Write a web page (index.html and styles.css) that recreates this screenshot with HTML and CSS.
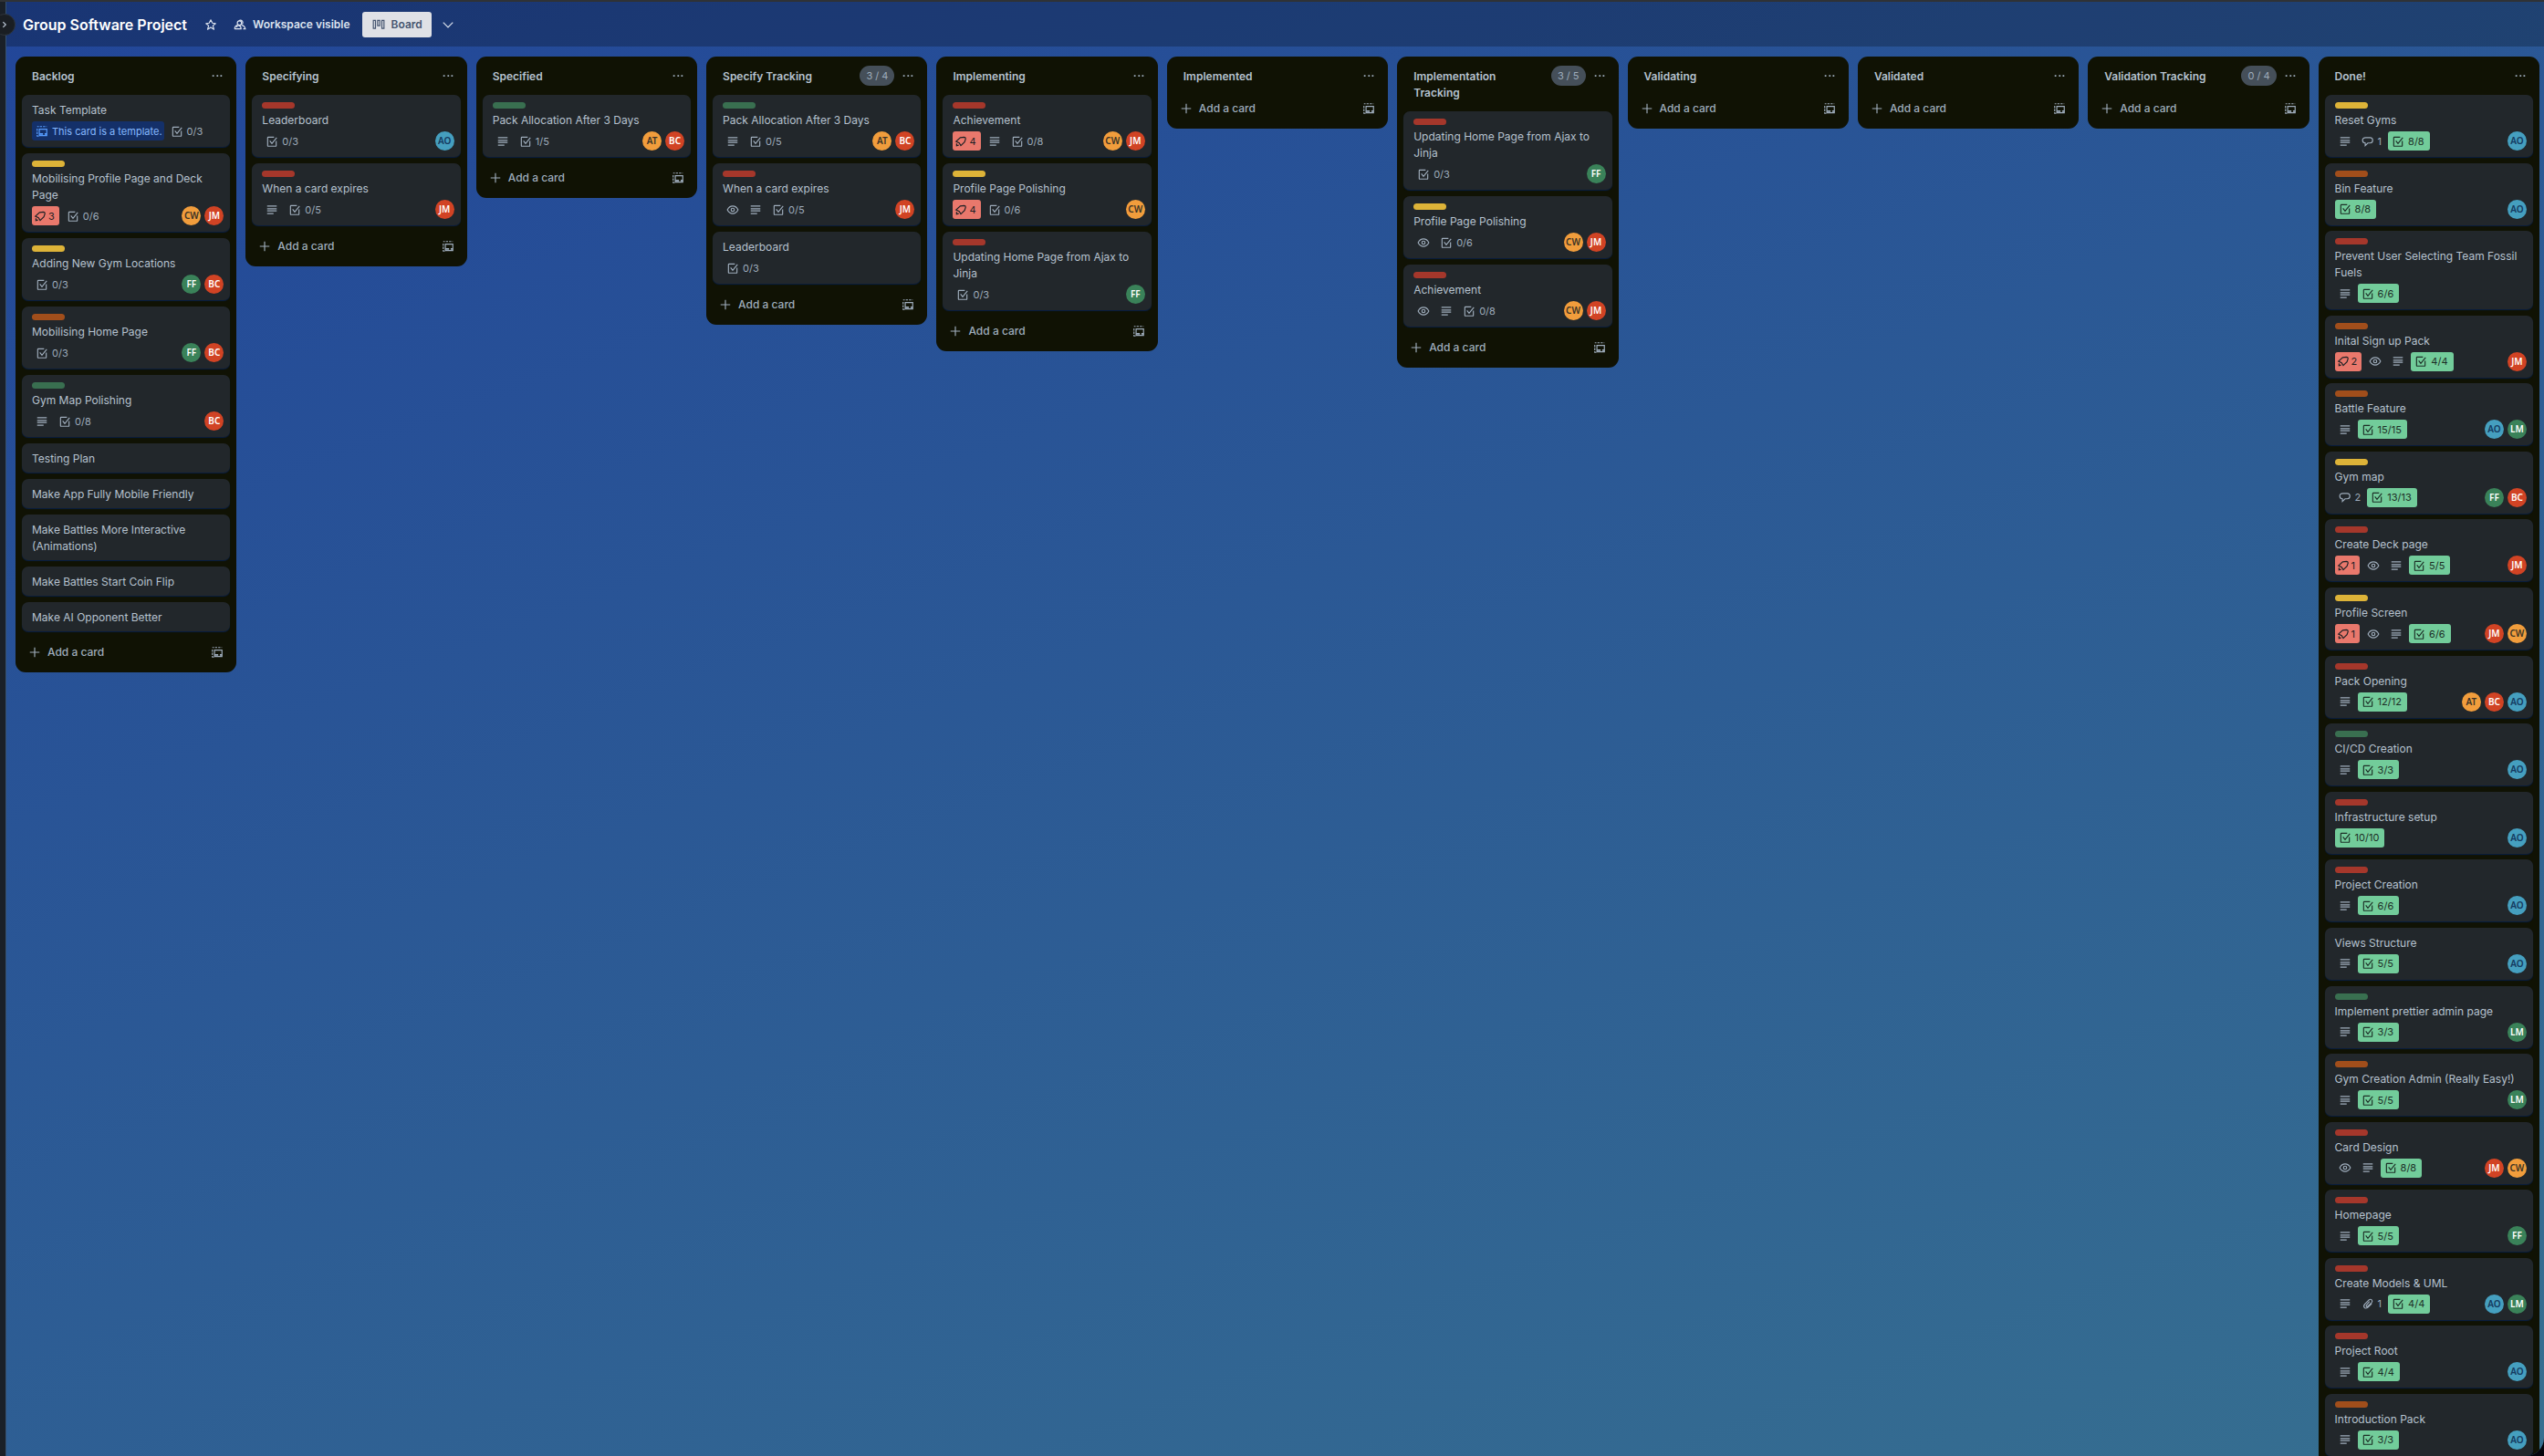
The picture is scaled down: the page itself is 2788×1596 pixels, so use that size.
FILE: index.html
```html
<!DOCTYPE html>
<html lang="en">
<head>
<meta charset="utf-8">
<meta name="viewport" content="width=device-width, initial-scale=1">
<title>Group Software Project</title>
<link rel="stylesheet" href="styles.css">
</head>
<body>
<svg class="sprite" aria-hidden="true">
  <symbol id="check" viewBox="0 0 24 24"><path d="M16 4H5a1 1 0 0 0-1 1v15a1 1 0 0 0 1 1h14a1 1 0 0 0 1-1v-9M8 11l4 5 9-11"/></symbol>
  <symbol id="desc" viewBox="0 0 24 24"><path d="M3 5h18M3 10h18M3 14h18M3 19h12"/></symbol>
  <symbol id="eye" viewBox="0 0 24 24"><path d="M2 12c2-4 6-7 10-7s8 3 10 7c-2 4-6 7-10 7s-8-3-10-7z"/><circle cx="12" cy="12" r="3"/></symbol>
  <symbol id="comment" viewBox="0 0 24 24"><path d="M8 5h8c3 0 5 2 5 5s-2 5-5 5h-4l-5 5v-5c-3 0-5-2-5-5s2-5 6-5z"/></symbol>
  <symbol id="clip" viewBox="0 0 24 24"><path d="M15 8l-6 7c-1 2 1 4 3 2l7-7c3-4-1-8-5-5l-8 8c-4 5 1 10 6 6l7-7"/></symbol>
  <symbol id="vote" viewBox="0 0 24 24"><path d="M11 5l7-1c2 0 3 1 3 3l-2 6-7 7-3-5-6-3zM4 16v4l4-1"/></symbol>
  <symbol id="template" viewBox="0 0 24 24"><path d="M3 3h3M8 3h4M14 3h4M20 3h1M3 7v4M3 13v4M3 19v2h3"/><path d="M7 8h14v12H7z"/><path d="M7 17h7M17 17h4" stroke-width="3"/></symbol>
  <symbol id="dots" viewBox="0 0 24 24"><path d="M3 12h3M11 12h3M18 12h3" stroke-width="3"/></symbol>
  <symbol id="plus" viewBox="0 0 24 24"><path d="M12 3v18M3 12h18"/></symbol>
  <symbol id="star" viewBox="0 0 24 24"><path d="M12 3l3 6 6 1-5 4 2 7-6-4-6 4 2-7-5-4 6-1z" stroke-linejoin="round"/></symbol>
  <symbol id="people" viewBox="0 0 24 24"><path d="M10 5a4 4 0 1 1 6 6M2 20c0-4 2-6 5-7M2 20h12v-1c0-3-2-5-5-6-2 1-3 2-3 4M15 13c4 0 6 3 7 7h-4"/><circle cx="11" cy="9" r="4"/></symbol>
  <symbol id="board" viewBox="0 0 24 24"><path d="M2 4h4v15H2zM10 4h4v10h-4zM18 4h4v15h-4z"/></symbol>
  <symbol id="down" viewBox="0 0 24 24"><path d="M3 8l9 9 9-9"/></symbol>
  <symbol id="right" viewBox="0 0 24 24"><path d="M8 5l7 7-7 7"/></symbol>
</svg>
<div class="app">
  <aside class="sidebar"><button class="toggle" aria-label="Expand sidebar"><svg><use href="#right"/></svg></button></aside>
  <main class="main">
    <header class="topbar">
      <h1>Group Software Project</h1>
      <button class="icon-btn star" aria-label="Star board"><svg><use href="#star"/></svg></button>
      <button class="visibility"><svg><use href="#people"/></svg>Workspace visible</button>
      <button class="view"><svg><use href="#board"/></svg>Board</button>
      <button class="icon-btn views" aria-label="More views"><svg><use href="#down"/></svg></button>
    </header>
    <div class="board">

      <section class="list">
        <header><h2>Backlog</h2><button class="icon-btn" aria-label="List actions"><svg><use href="#dots"/></svg></button></header>
        <ul>
          <li class="card"><a href="#">Task Template</a><div class="meta"><span class="badge tpl"><svg><use href="#template"/></svg>This card is a template.</span><span class="badge"><svg><use href="#check"/></svg>0/3</span></div></li>
          <li class="card"><i class="label yellow"></i><a href="#">Mobilising Profile Page and Deck Page</a><div class="meta"><span class="badge votes"><svg><use href="#vote"/></svg>3</span><span class="badge"><svg><use href="#check"/></svg>0/6</span><span class="members"><b class="amber">CW</b><b class="red">JM</b></span></div></li>
          <li class="card"><i class="label yellow"></i><a href="#">Adding New Gym Locations</a><div class="meta"><span class="badge"><svg><use href="#check"/></svg>0/3</span><span class="members"><b class="green">FF</b><b class="red">BC</b></span></div></li>
          <li class="card"><i class="label orange"></i><a href="#">Mobilising Home Page</a><div class="meta"><span class="badge"><svg><use href="#check"/></svg>0/3</span><span class="members"><b class="green">FF</b><b class="red">BC</b></span></div></li>
          <li class="card"><i class="label green"></i><a href="#">Gym Map Polishing</a><div class="meta"><span class="badge"><svg><use href="#desc"/></svg></span><span class="badge"><svg><use href="#check"/></svg>0/8</span><span class="members"><b class="red">BC</b></span></div></li>
          <li class="card"><a href="#">Testing Plan</a></li>
          <li class="card"><a href="#">Make App Fully Mobile Friendly</a></li>
          <li class="card"><a href="#">Make Battles More Interactive (Animations)</a></li>
          <li class="card"><a href="#">Make Battles Start Coin Flip</a></li>
          <li class="card"><a href="#">Make AI Opponent Better</a></li>
        </ul>
        <footer><button class="add"><svg><use href="#plus"/></svg>Add a card</button><button class="icon-btn" aria-label="Create from template"><svg><use href="#template"/></svg></button></footer>
      </section>

      <section class="list">
        <header><h2>Specifying</h2><button class="icon-btn" aria-label="List actions"><svg><use href="#dots"/></svg></button></header>
        <ul>
          <li class="card"><i class="label crimson"></i><a href="#">Leaderboard</a><div class="meta"><span class="badge"><svg><use href="#check"/></svg>0/3</span><span class="members"><b class="blue">AO</b></span></div></li>
          <li class="card"><i class="label crimson"></i><a href="#">When a card expires</a><div class="meta"><span class="badge"><svg><use href="#desc"/></svg></span><span class="badge"><svg><use href="#check"/></svg>0/5</span><span class="members"><b class="red">JM</b></span></div></li>
        </ul>
        <footer><button class="add"><svg><use href="#plus"/></svg>Add a card</button><button class="icon-btn" aria-label="Create from template"><svg><use href="#template"/></svg></button></footer>
      </section>

      <section class="list">
        <header><h2>Specified</h2><button class="icon-btn" aria-label="List actions"><svg><use href="#dots"/></svg></button></header>
        <ul>
          <li class="card"><i class="label green"></i><a href="#">Pack Allocation After 3 Days</a><div class="meta"><span class="badge"><svg><use href="#desc"/></svg></span><span class="badge"><svg><use href="#check"/></svg>1/5</span><span class="members"><b class="amber">AT</b><b class="red">BC</b></span></div></li>
        </ul>
        <footer><button class="add"><svg><use href="#plus"/></svg>Add a card</button><button class="icon-btn" aria-label="Create from template"><svg><use href="#template"/></svg></button></footer>
      </section>

      <section class="list">
        <header><h2>Specify Tracking</h2><span class="count">3 / 4</span><button class="icon-btn" aria-label="List actions"><svg><use href="#dots"/></svg></button></header>
        <ul>
          <li class="card"><i class="label green"></i><a href="#">Pack Allocation After 3 Days</a><div class="meta"><span class="badge"><svg><use href="#desc"/></svg></span><span class="badge"><svg><use href="#check"/></svg>0/5</span><span class="members"><b class="amber">AT</b><b class="red">BC</b></span></div></li>
          <li class="card"><i class="label crimson"></i><a href="#">When a card expires</a><div class="meta"><span class="badge"><svg><use href="#eye"/></svg></span><span class="badge"><svg><use href="#desc"/></svg></span><span class="badge"><svg><use href="#check"/></svg>0/5</span><span class="members"><b class="red">JM</b></span></div></li>
          <li class="card"><a href="#">Leaderboard</a><div class="meta"><span class="badge"><svg><use href="#check"/></svg>0/3</span></div></li>
        </ul>
        <footer><button class="add"><svg><use href="#plus"/></svg>Add a card</button><button class="icon-btn" aria-label="Create from template"><svg><use href="#template"/></svg></button></footer>
      </section>

      <section class="list">
        <header><h2>Implementing</h2><button class="icon-btn" aria-label="List actions"><svg><use href="#dots"/></svg></button></header>
        <ul>
          <li class="card"><i class="label crimson"></i><a href="#">Achievement</a><div class="meta"><span class="badge votes"><svg><use href="#vote"/></svg>4</span><span class="badge"><svg><use href="#desc"/></svg></span><span class="badge"><svg><use href="#check"/></svg>0/8</span><span class="members"><b class="amber">CW</b><b class="red">JM</b></span></div></li>
          <li class="card"><i class="label yellow"></i><a href="#">Profile Page Polishing</a><div class="meta"><span class="badge votes"><svg><use href="#vote"/></svg>4</span><span class="badge"><svg><use href="#check"/></svg>0/6</span><span class="members"><b class="amber">CW</b></span></div></li>
          <li class="card"><i class="label crimson"></i><a href="#">Updating Home Page from Ajax to Jinja</a><div class="meta"><span class="badge"><svg><use href="#check"/></svg>0/3</span><span class="members"><b class="green">FF</b></span></div></li>
        </ul>
        <footer><button class="add"><svg><use href="#plus"/></svg>Add a card</button><button class="icon-btn" aria-label="Create from template"><svg><use href="#template"/></svg></button></footer>
      </section>

      <section class="list">
        <header><h2>Implemented</h2><button class="icon-btn" aria-label="List actions"><svg><use href="#dots"/></svg></button></header>
        <footer><button class="add"><svg><use href="#plus"/></svg>Add a card</button><button class="icon-btn" aria-label="Create from template"><svg><use href="#template"/></svg></button></footer>
      </section>

      <section class="list">
        <header><h2>Implementation Tracking</h2><span class="count">3 / 5</span><button class="icon-btn" aria-label="List actions"><svg><use href="#dots"/></svg></button></header>
        <ul>
          <li class="card"><i class="label crimson"></i><a href="#">Updating Home Page from Ajax to Jinja</a><div class="meta"><span class="badge"><svg><use href="#check"/></svg>0/3</span><span class="members"><b class="green">FF</b></span></div></li>
          <li class="card"><i class="label yellow"></i><a href="#">Profile Page Polishing</a><div class="meta"><span class="badge"><svg><use href="#eye"/></svg></span><span class="badge"><svg><use href="#check"/></svg>0/6</span><span class="members"><b class="amber">CW</b><b class="red">JM</b></span></div></li>
          <li class="card"><i class="label crimson"></i><a href="#">Achievement</a><div class="meta"><span class="badge"><svg><use href="#eye"/></svg></span><span class="badge"><svg><use href="#desc"/></svg></span><span class="badge"><svg><use href="#check"/></svg>0/8</span><span class="members"><b class="amber">CW</b><b class="red">JM</b></span></div></li>
        </ul>
        <footer><button class="add"><svg><use href="#plus"/></svg>Add a card</button><button class="icon-btn" aria-label="Create from template"><svg><use href="#template"/></svg></button></footer>
      </section>

      <section class="list">
        <header><h2>Validating</h2><button class="icon-btn" aria-label="List actions"><svg><use href="#dots"/></svg></button></header>
        <footer><button class="add"><svg><use href="#plus"/></svg>Add a card</button><button class="icon-btn" aria-label="Create from template"><svg><use href="#template"/></svg></button></footer>
      </section>

      <section class="list">
        <header><h2>Validated</h2><button class="icon-btn" aria-label="List actions"><svg><use href="#dots"/></svg></button></header>
        <footer><button class="add"><svg><use href="#plus"/></svg>Add a card</button><button class="icon-btn" aria-label="Create from template"><svg><use href="#template"/></svg></button></footer>
      </section>

      <section class="list">
        <header><h2>Validation Tracking</h2><span class="count">0 / 4</span><button class="icon-btn" aria-label="List actions"><svg><use href="#dots"/></svg></button></header>
        <footer><button class="add"><svg><use href="#plus"/></svg>Add a card</button><button class="icon-btn" aria-label="Create from template"><svg><use href="#template"/></svg></button></footer>
      </section>

      <section class="list full">
        <header><h2>Done!</h2><button class="icon-btn" aria-label="List actions"><svg><use href="#dots"/></svg></button></header>
        <ul>
          <li class="card"><i class="label yellow"></i><a href="#">Reset Gyms</a><div class="meta"><span class="badge"><svg><use href="#desc"/></svg></span><span class="badge"><svg><use href="#comment"/></svg>1</span><span class="badge done"><svg><use href="#check"/></svg>8/8</span><span class="members"><b class="blue">AO</b></span></div></li>
          <li class="card"><i class="label orange"></i><a href="#">Bin Feature</a><div class="meta"><span class="badge done"><svg><use href="#check"/></svg>8/8</span><span class="members"><b class="blue">AO</b></span></div></li>
          <li class="card"><i class="label crimson"></i><a href="#">Prevent User Selecting Team Fossil Fuels</a><div class="meta"><span class="badge"><svg><use href="#desc"/></svg></span><span class="badge done"><svg><use href="#check"/></svg>6/6</span></div></li>
          <li class="card"><i class="label orange"></i><a href="#">Inital Sign up Pack</a><div class="meta"><span class="badge votes"><svg><use href="#vote"/></svg>2</span><span class="badge"><svg><use href="#eye"/></svg></span><span class="badge"><svg><use href="#desc"/></svg></span><span class="badge done"><svg><use href="#check"/></svg>4/4</span><span class="members"><b class="red">JM</b></span></div></li>
          <li class="card"><i class="label orange"></i><a href="#">Battle Feature</a><div class="meta"><span class="badge"><svg><use href="#desc"/></svg></span><span class="badge done"><svg><use href="#check"/></svg>15/15</span><span class="members"><b class="blue">AO</b><b class="green">LM</b></span></div></li>
          <li class="card"><i class="label yellow"></i><a href="#">Gym map</a><div class="meta"><span class="badge"><svg><use href="#comment"/></svg>2</span><span class="badge done"><svg><use href="#check"/></svg>13/13</span><span class="members"><b class="green">FF</b><b class="red">BC</b></span></div></li>
          <li class="card"><i class="label crimson"></i><a href="#">Create Deck page</a><div class="meta"><span class="badge votes"><svg><use href="#vote"/></svg>1</span><span class="badge"><svg><use href="#eye"/></svg></span><span class="badge"><svg><use href="#desc"/></svg></span><span class="badge done"><svg><use href="#check"/></svg>5/5</span><span class="members"><b class="red">JM</b></span></div></li>
          <li class="card"><i class="label yellow"></i><a href="#">Profile Screen</a><div class="meta"><span class="badge votes"><svg><use href="#vote"/></svg>1</span><span class="badge"><svg><use href="#eye"/></svg></span><span class="badge"><svg><use href="#desc"/></svg></span><span class="badge done"><svg><use href="#check"/></svg>6/6</span><span class="members"><b class="red">JM</b><b class="amber">CW</b></span></div></li>
          <li class="card"><i class="label crimson"></i><a href="#">Pack Opening</a><div class="meta"><span class="badge"><svg><use href="#desc"/></svg></span><span class="badge done"><svg><use href="#check"/></svg>12/12</span><span class="members"><b class="amber">AT</b><b class="red">BC</b><b class="blue">AO</b></span></div></li>
          <li class="card"><i class="label green"></i><a href="#">CI/CD Creation</a><div class="meta"><span class="badge"><svg><use href="#desc"/></svg></span><span class="badge done"><svg><use href="#check"/></svg>3/3</span><span class="members"><b class="blue">AO</b></span></div></li>
          <li class="card"><i class="label crimson"></i><a href="#">Infrastructure setup</a><div class="meta"><span class="badge done"><svg><use href="#check"/></svg>10/10</span><span class="members"><b class="blue">AO</b></span></div></li>
          <li class="card"><i class="label crimson"></i><a href="#">Project Creation</a><div class="meta"><span class="badge"><svg><use href="#desc"/></svg></span><span class="badge done"><svg><use href="#check"/></svg>6/6</span><span class="members"><b class="blue">AO</b></span></div></li>
          <li class="card"><a href="#">Views Structure</a><div class="meta"><span class="badge"><svg><use href="#desc"/></svg></span><span class="badge done"><svg><use href="#check"/></svg>5/5</span><span class="members"><b class="blue">AO</b></span></div></li>
          <li class="card"><i class="label green"></i><a href="#">Implement prettier admin page</a><div class="meta"><span class="badge"><svg><use href="#desc"/></svg></span><span class="badge done"><svg><use href="#check"/></svg>3/3</span><span class="members"><b class="green">LM</b></span></div></li>
          <li class="card"><i class="label orange"></i><a href="#">Gym Creation Admin (Really Easy!)</a><div class="meta"><span class="badge"><svg><use href="#desc"/></svg></span><span class="badge done"><svg><use href="#check"/></svg>5/5</span><span class="members"><b class="green">LM</b></span></div></li>
          <li class="card"><i class="label crimson"></i><a href="#">Card Design</a><div class="meta"><span class="badge"><svg><use href="#eye"/></svg></span><span class="badge"><svg><use href="#desc"/></svg></span><span class="badge done"><svg><use href="#check"/></svg>8/8</span><span class="members"><b class="red">JM</b><b class="amber">CW</b></span></div></li>
          <li class="card"><i class="label crimson"></i><a href="#">Homepage</a><div class="meta"><span class="badge"><svg><use href="#desc"/></svg></span><span class="badge done"><svg><use href="#check"/></svg>5/5</span><span class="members"><b class="green">FF</b></span></div></li>
          <li class="card"><i class="label crimson"></i><a href="#">Create Models &amp; UML</a><div class="meta"><span class="badge"><svg><use href="#desc"/></svg></span><span class="badge"><svg><use href="#clip"/></svg>1</span><span class="badge done"><svg><use href="#check"/></svg>4/4</span><span class="members"><b class="blue">AO</b><b class="green">LM</b></span></div></li>
          <li class="card"><i class="label crimson"></i><a href="#">Project Root</a><div class="meta"><span class="badge"><svg><use href="#desc"/></svg></span><span class="badge done"><svg><use href="#check"/></svg>4/4</span><span class="members"><b class="blue">AO</b></span></div></li>
          <li class="card"><i class="label orange"></i><a href="#">Introduction Pack</a><div class="meta"><span class="badge"><svg><use href="#desc"/></svg></span><span class="badge done"><svg><use href="#check"/></svg>3/3</span><span class="members"><b class="blue">AO</b></span></div></li>
        </ul>
      </section>
    </div>
  </main>
</div>
</body>
</html>
```
FILE: styles.css
```css
* { box-sizing: border-box; }

body {
  margin: 0;
  background: #04040c;
  font: 12px/18px Inter, "Liberation Sans", sans-serif;
  color: #b6c2cf;
}

h1, h2, ul { margin: 0; padding: 0; list-style: none; }
button { border: 0; padding: 0; background: none; color: inherit; font: inherit; cursor: pointer; }
a { color: inherit; text-decoration: none; }
svg { width: 14px; height: 14px; flex: none; fill: none; stroke: currentColor; stroke-width: 2; }
.sprite { display: none; }

.app {
  display: flex;
  height: 100vh;
  overflow: hidden;
  border-top: 2px solid #2f3236;
  border-bottom-right-radius: 20px;
  background: linear-gradient(159deg, #224699, #366f90);
}

.sidebar {
  position: relative;
  z-index: 1;
  flex: none;
  width: 7px;
  background: #1a2028;
  border-right: 1px solid #35506f;
}
.toggle {
  position: absolute;
  top: 13px;
  right: -11px;
  display: flex;
  align-items: center;
  justify-content: center;
  width: 24px;
  height: 24px;
  border: 1px solid #2f353c;
  border-radius: 50%;
  background: #1a1e23;
}
.toggle svg { width: 10px; height: 10px; stroke-width: 3; }

.main { flex: 1; min-width: 0; display: flex; flex-direction: column; }

.topbar {
  display: flex;
  align-items: center;
  height: 49px;
  flex: none;
  padding-left: 18px;
  background: rgba(0, 0, 0, 0.24);
  color: #fff;
}
.topbar h1 { font-size: 16px; font-weight: 600; margin-right: 12px; }
.icon-btn {
  display: flex;
  align-items: center;
  justify-content: center;
  flex: none;
  width: 28px;
  height: 28px;
  color: #9fadbc;
}
.topbar .icon-btn { color: #dce3ef; }
.visibility, .view { display: flex; align-items: center; gap: 7px; font-weight: 600; color: #dce3ef; }
.visibility { margin: 0 13px 0 11px; }
.view {
  height: 28px;
  padding: 0 10px 0 11px;
  border-radius: 3px;
  background: #dfe1e6;
  color: #44546f;
  margin-right: 4px;
}

.board {
  flex: 1;
  min-height: 0;
  display: flex;
  align-items: flex-start;
  gap: 10px;
  padding: 11px 5px 0 10px;
}

.list {
  flex: 1 0 0;
  min-width: 0;
  border-radius: 11px;
  background: #101204;
}
.list header { display: flex; padding: 7px 7px 0 18px; }
.list h2 { flex: 1; padding: 6px 12px 11px 0; font-size: 12px; font-weight: 600; }
.count {
  height: 22px;
  margin: 3px 1px 0 0;
  padding: 0 7px;
  border-radius: 11px;
  background: #454f59;
  font-size: 11px;
  line-height: 22px;
  color: #9fadbc;
}
.list ul { display: flex; flex-direction: column; gap: 7px; padding: 0 7px 8px; }
.list footer { display: flex; padding: 1px 7px 8px; }
.add {
  flex: 1;
  display: flex;
  align-items: center;
  gap: 7px;
  height: 28px;
  padding-left: 7px;
  font-weight: 500;
  color: #9fadbc;
}

.full { align-self: stretch; display: flex; flex-direction: column; border-radius: 11px 11px 0 0; }
.full ul { flex: 1; justify-content: space-between; gap: 6px; padding-bottom: 0; }

.card {
  padding: 8px 7px 6px 11px;
  border-radius: 7px;
  background: #22272b;
  box-shadow: 0 1px 1px #091e42;
}
.card a { display: block; }
.label { display: block; width: 36px; height: 7px; margin-bottom: 4px; border-radius: 4px; }
.label.yellow { background: #ddb338; }
.label.orange { background: #a14e1b; }
.label.crimson { background: #a5372b; }
.label.green { background: #396f50; }

.meta { display: flex; gap: 3px; margin-top: 4px; }
.card a + .meta { margin-top: 4px; }
.label + a + .meta, .card a + .meta { margin-top: 3px; }
.card:has(.label) { padding-bottom: 7px; }
.card:has(.meta) { padding-bottom: 7px; }
.badge {
  display: flex;
  align-items: center;
  gap: 4px;
  height: 21px;
  padding: 0 4px;
  border-radius: 3px;
  font-size: 11px;
  color: #9fadbc;
}
.badge.tpl { padding-right: 2px; background: #143069; color: #85b8ff; }
.badge.tpl svg { color: #579dff; }
.badge.votes { gap: 2px; padding: 0 5px 0 2px; margin-right: 1px; background: #e9786c; color: #1d2125; }
.badge.done { padding-right: 6px; background: #72cc9a; color: #1d2f27; }

.members { display: flex; gap: 4px; margin-left: auto; }
.members b {
  width: 21px;
  height: 21px;
  border-radius: 50%;
  font: 600 10px/21px "Noto Sans", sans-serif;
  text-align: center;
  color: #fff;
}
.members .amber { background: #f19d3c; color: #3a3226; }
.members .red { background: #d14324; }
.members .green { background: #3a8259; }
.members .blue { background: #459fbf; color: #143a60; }
```
